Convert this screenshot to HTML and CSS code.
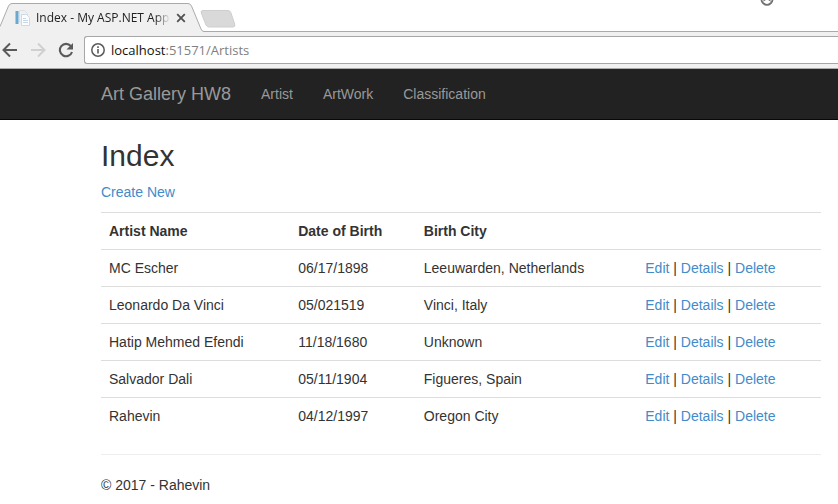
FILE: index.html
```html
<!DOCTYPE html>
<html lang="en">
<head>
<meta charset="utf-8">
<title>Index - My ASP.NET Application</title>
<link rel="stylesheet" href="styles.css">
</head>
<body>
<header class="browser">
  <div class="tab-strip">
    <svg class="tab-shapes" width="240" height="32" viewBox="0 0 240 32" aria-hidden="true">
      <path d="M0 32V26.500L8.500 6Q9.800 3.500 12 3.500H188Q190.300 3.500 191.500 6L201 29Q202 31.500 204 31.500V32Z" fill="#f0f0f0"/>
      <path d="M0 26.500L8.500 6Q9.800 3.500 12 3.500H188Q190.300 3.500 191.500 6L201 29Q202 31.500 204 31.500" fill="none" stroke="#aaa"/>
      <path d="M203 10.500H228Q230 10.500 230.800 12.500L234.700 24Q235.500 27 233 27H209Q207 27 206 25L201.300 13Q200.300 10.500 203 10.500Z" fill="#d9d9d9" stroke="#cecece"/>
    </svg>
    <div class="tab">
      <svg width="16" height="16" viewBox="0 0 16 16" aria-hidden="true">
        <path d="M1 1H4.500V14H1Z" fill="#6aa9cf"/><path d="M1 1H2V14H1Z" fill="#a5cee4"/>
        <path d="M5.500 .5H10.500L13.500 3.500V12H5.500Z" fill="#eef1f4" stroke="#dbe0e5"/>
        <path d="M7.500 4.500H12.500L15.500 7.500V15.500H7.500Z" fill="#fafcff" stroke="#d0d8e1"/>
        <path d="M9 8.500H12M9 10.500H14M9 12.500H14" stroke="#c8d8e8"/>
      </svg>
      <span class="tab-title">Index - My ASP.NET Appl</span>
      <button class="icon-button" type="button" aria-label="Close tab">
        <svg width="10" height="10" viewBox="0 0 10 10"><path d="M1.200 1.200L8.800 8.800M8.800 1.200L1.200 8.800" stroke="#505050" stroke-width="1.800"/></svg>
      </button>
    </div>
    <svg class="profile" width="16" height="7" viewBox="0 0 16 7" aria-hidden="true"><path d="M2.500 0Q2.500 1.500 4 3Q8 6.800 12 3Q13.500 1.500 13.500 0" fill="none" stroke="#707070" stroke-width="1.800"/><path d="M4 1.200L6.500 0M12 1.200L9.500 0" stroke="#808080"/></svg>
  </div>
  <div class="toolbar">
    <button class="icon-button" type="button" aria-label="Back"><svg width="16" height="16" viewBox="0 0 16 16"><path d="M15 8H2M8 1.500L1.500 8L8 14.500" fill="none" stroke="#5a5a5a" stroke-width="2"/></svg></button>
    <button class="icon-button" type="button" aria-label="Forward"><svg width="16" height="16" viewBox="0 0 16 16"><path d="M1 8H14M8 1.500L14.500 8L8 14.500" fill="none" stroke="#d0d0d0" stroke-width="2"/></svg></button>
    <button class="icon-button" type="button" aria-label="Reload"><svg width="16" height="16" viewBox="0 0 16 16"><path d="M12.800 4A6.200 6.200 0 1 0 14 10" fill="none" stroke="#5a5a5a" stroke-width="2.100"/><path d="M15 1V7.500H8.500Z" fill="#5a5a5a"/></svg></button>
    <div class="address">
      <svg width="14" height="14" viewBox="0 0 14 14" aria-hidden="true"><circle cx="7" cy="7" r="6.200" fill="none" stroke="#5a5a5a" stroke-width="1.500"/><path d="M7 6V10.500M7 3.300V5" stroke="#5a5a5a" stroke-width="1.600"/></svg>
      <span class="url">localhost<span class="path">:51571/Artists</span></span>
    </div>
  </div>
</header>
<nav class="navbar">
  <a class="brand" href="#">Art Gallery HW8</a>
  <a href="#">Artist</a>
  <a href="#">ArtWork</a>
  <a href="#">Classification</a>
</nav>
<main class="content">
  <h2>Index</h2>
  <p><a href="#">Create New</a></p>
  <table>
    <thead><tr><th>Artist Name</th><th>Date of Birth</th><th>Birth City</th><th></th></tr></thead>
    <tbody>
      <tr><td>MC Escher</td><td>06/17/1898</td><td>Leeuwarden, Netherlands</td><td><a href="#">Edit</a> | <a href="#">Details</a> | <a href="#">Delete</a></td></tr>
      <tr><td>Leonardo Da Vinci</td><td>05/021519</td><td>Vinci, Italy</td><td><a href="#">Edit</a> | <a href="#">Details</a> | <a href="#">Delete</a></td></tr>
      <tr><td>Hatip Mehmed Efendi</td><td>11/18/1680</td><td>Unknown</td><td><a href="#">Edit</a> | <a href="#">Details</a> | <a href="#">Delete</a></td></tr>
      <tr><td>Salvador Dali</td><td>05/11/1904</td><td>Figueres, Spain</td><td><a href="#">Edit</a> | <a href="#">Details</a> | <a href="#">Delete</a></td></tr>
      <tr><td>Rahevin</td><td>04/12/1997</td><td>Oregon City</td><td><a href="#">Edit</a> | <a href="#">Details</a> | <a href="#">Delete</a></td></tr>
    </tbody>
  </table>
  <hr>
  <footer><p>© 2017 - Rahevin</p></footer>
</main>
</body>
</html>
```
FILE: styles.css
```css
* { box-sizing: border-box; }

body {
  margin: 0;
  background: #fff;
  color: #333;
  font: 14px/20px "Liberation Sans", Arial, sans-serif;
}

a { color: #428bca; text-decoration: none; }

.browser { font-family: "Open Sans", "Noto Sans", sans-serif; }

.tab-strip {
  position: relative;
  display: flex;
  justify-content: space-between;
  height: 32px;
  border-bottom: 1px solid #aaa;
}

.tab-shapes { position: absolute; left: 0; top: 0; }

.tab {
  position: relative;
  display: flex;
  align-items: center;
  justify-content: space-between;
  width: 190px;
  padding: 4px 4px 0 14px;
}

.tab svg { flex: none; }

.tab-title {
  flex: 1;
  margin-left: 6px;
  color: #222;
  font-size: 12px;
  white-space: nowrap;
  -webkit-mask-image: linear-gradient(to right, #000 85%, transparent 96%);
  mask-image: linear-gradient(to right, #000 85%, transparent 96%);
}

.profile { margin-right: 63px; }

.icon-button {
  display: flex;
  flex: none;
  padding: 0;
  border: 0;
  background: none;
}

.toolbar {
  display: flex;
  align-items: center;
  gap: 12px;
  height: 37px;
  padding-left: 2px;
  border-bottom: 1px solid #aaa;
  background: #f0f0f0;
}

.address {
  display: flex;
  flex: 1;
  align-items: center;
  gap: 6px;
  height: 28px;
  margin-left: -2px;
  padding-left: 6px;
  border: 1px solid #a6a6a6;
  border-right: 0;
  border-radius: 3px 0 0 3px;
  background: #fff;
}

.url { color: #111; font-size: 13px; }

.path { color: #808080; }

.navbar {
  display: flex;
  padding-left: 86px;
  border-bottom: 1px solid #080808;
  background: #222;
}

.navbar a { padding: 15px; color: #999; }

.navbar .brand { font-size: 18px; }

.content { padding: 0 17px 0 101px; }

h2 {
  margin: 19px 0 10px;
  font-size: 30px;
  font-weight: 400;
  line-height: 33px;
}

p { margin: 0 0 10px; }

table {
  width: 100%;
  border-collapse: separate;
  border-spacing: 0;
}

th, td {
  padding: 8px;
  border-top: 1px solid #ddd;
  text-align: left;
}

hr {
  margin: 20px 0;
  border: 0;
  border-top: 1px solid #eee;
}
```
